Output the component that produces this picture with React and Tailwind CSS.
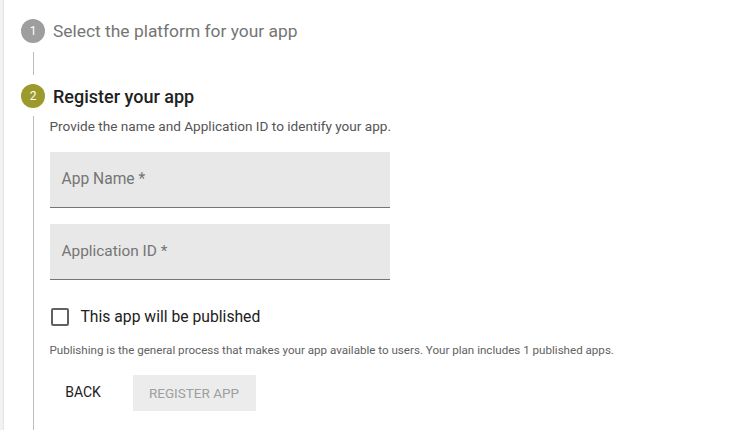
export default function App() {
  return (
    <div className="w-[731px] h-[430px] overflow-hidden bg-white flex" style={{ fontFamily: "Roboto, 'Liberation Sans', sans-serif" }}>
      <div className="w-[4px] bg-[#f2f2f2] border-r border-[#e4e4e4] shrink-0" />
      <div className="flex-1 pl-[17px] pt-[19px]">
        {/* Step 1 */}
        <div className="flex items-center h-[24px]">
          <div className="w-[24px] h-[24px] rounded-full bg-[#9e9e9e] text-white text-[12px] flex items-center justify-center">1</div>
          <div className="ml-[8px] text-[17.4px] text-[#757575]">Select the platform for your app</div>
        </div>
        <div className="ml-[11.5px] w-px h-[23px] mt-[9px] bg-[#bdbdbd]" />
        {/* Step 2 */}
        <div className="flex items-center h-[24px] mt-[9px]">
          <div className="w-[24px] h-[24px] rounded-full bg-[#9c9a2a] text-white text-[12px] flex items-center justify-center">2</div>
          <div className="ml-[8px] text-[18px] text-[#212121] font-medium">Register your app</div>
        </div>
        <div className="flex mt-[8px]">
          <div className="ml-[11.5px] w-px bg-[#bdbdbd] h-[340px] shrink-0" />
          <div className="ml-[16px] flex flex-col">
            <div className="text-[13.6px] text-[#555] leading-[20px]">Provide the name and Application ID to identify your app.</div>
            <div className="mt-[16px] w-[340px] h-[56px] bg-[#e8e8e8] border-b border-[#757575] flex items-center px-[12px] text-[15.6px] text-[#757575]">App Name *</div>
            <div className="mt-[16px] w-[340px] h-[56px] bg-[#e8e8e8] border-b border-[#757575] flex items-center px-[12px] text-[15.4px] text-[#757575]">Application ID *</div>
            <div className="mt-[25px] flex items-center">
              <div className="w-[18px] h-[18px] border-2 border-[#616161] rounded-[2px] ml-[1px]" />
              <div className="ml-[12px] text-[15.7px] text-[#212121]">This app will be published</div>
            </div>
            <div className="mt-[13px] text-[11.6px] text-[#616161]">Publishing is the general process that makes your app available to users. Your plan includes 1 published apps.</div>
            <div className="mt-[16px] flex items-center">
              <div className="w-[67px] h-[36px] flex items-center justify-center text-[14px] text-[#212121]">BACK</div>
              <div className="ml-[16px] h-[36px] w-[123px] bg-[#ececec] flex items-center justify-center text-[13.5px] text-[#9e9e9e]">REGISTER APP</div>
            </div>
          </div>
        </div>
      </div>
    </div>
  );
}
